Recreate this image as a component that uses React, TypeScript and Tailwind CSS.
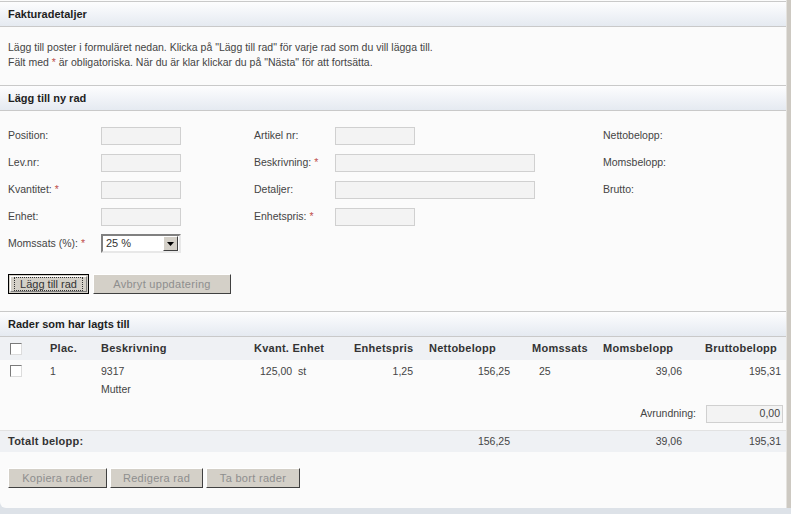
import type { ReactNode } from 'react';

function SectionHeader({ children }: { children: ReactNode }) {
  return (
    <div className="flex h-[26px] items-center border-y border-[#c9c9c9] bg-linear-to-b from-[#fdfdfe] to-[#e5eaf1] px-2 text-[11px] font-bold text-[#1e1e1e]">
      {children}
    </div>
  );
}

function Req() {
  return <span className="ml-[3px] text-[#c0504d]">*</span>;
}

function Field({ w }: { w: string }) {
  return <div className={`h-[18px] border border-[#d0d0d0] bg-[#f3f3f3] ${w}`} />;
}

function Check() {
  return <span className="block h-[12px] w-[12px] border-t border-l border-t-[#7a7a7a] border-l-[#7a7a7a] border-b border-r border-b-[#dcdcdc] border-r-[#dcdcdc] bg-white" />;
}

function GrayButton({ children, w }: { children: ReactNode; w: string }) {
  return (
    <button
      type="button"
      className={`h-[20px] border border-t-white border-l-white border-b-[#404040] border-r-[#404040] bg-[#d4d0c8] text-[11px] tracking-[0.3px] text-[#8e8e8e] ${w}`}
    >
      {children}
    </button>
  );
}

const cols = 'grid-cols-[42px_51px_153px_96px_74px_103px_71px_102px_1fr]';

export default function App() {
  return (
    <div className="w-[791px] h-[514px] overflow-hidden bg-[#dde2e8] font-['Liberation_Sans',Arial,sans-serif] text-[10.5px] text-[#444]">
      <div className="flex h-[508px]">
        <div className="flex-1 rounded-bl-[6px] bg-[#fbfbfb] pt-[1px]">
          <SectionHeader>Fakturadetaljer</SectionHeader>
          <div className="px-2 pt-[13px] pb-[15px] leading-[15px]">
            <p>Lägg till poster i formuläret nedan. Klicka på "Lägg till rad" för varje rad som du vill lägga till.</p>
            <p>
              Fält med <span className="text-[#c0504d]">*</span> är obligatoriska. När du är klar klickar du på "Nästa" för att fortsätta.
            </p>
          </div>

          <SectionHeader>Lägg till ny rad</SectionHeader>
          <div className="px-2 pt-[11px]">
            <div className="grid grid-cols-[93px_153px_81px_268px_1fr] grid-rows-[repeat(5,27px)] items-center">
              <span>Position:</span>
              <Field w="w-[80px]" />
              <span>Artikel nr:</span>
              <Field w="w-[80px]" />
              <span>Nettobelopp:</span>

              <span>Lev.nr:</span>
              <Field w="w-[80px]" />
              <span>
                Beskrivning:<Req />
              </span>
              <Field w="w-[200px]" />
              <span>Momsbelopp:</span>

              <span>
                Kvantitet:<Req />
              </span>
              <Field w="w-[80px]" />
              <span>Detaljer:</span>
              <Field w="w-[200px]" />
              <span>Brutto:</span>

              <span>Enhet:</span>
              <Field w="w-[80px]" />
              <span>
                Enhetspris:<Req />
              </span>
              <Field w="w-[80px]" />
              <span />

              <span>
                Momssats (%):<Req />
              </span>
              <div className="flex h-[19px] w-[80px] items-center justify-between border-2 border-t-[#808080] border-l-[#808080] border-b-[#e8e8e8] border-r-[#e8e8e8] bg-white pl-[3px] pr-[1px] text-[11px] text-[#333]">
                <span>25 %</span>
                <span className="flex h-[15px] w-[15px] items-center justify-center border border-t-white border-l-white border-b-[#404040] border-r-[#404040] bg-[#d4d0c8]">
                  <svg width="7" height="4" viewBox="0 0 7 4">
                    <path d="M0 0h7L3.5 4z" fill="#000" />
                  </svg>
                </span>
              </div>
              <span />
              <span />
              <span />
            </div>

            <div className="mt-[17px] flex gap-[4px]">
              <button type="button" className="h-[20px] w-[81px] border border-black bg-[#d4d0c8] p-[1px] text-[11px] text-[#333]">
                <span className="flex h-full items-center justify-center border border-t-white border-l-white border-b-[#808080] border-r-[#808080]">
                  <span className="border border-dotted border-[#333] px-[5px] leading-[12px]">Lägg till rad</span>
                </span>
              </button>
              <GrayButton w="w-[138px]">Avbryt uppdatering</GrayButton>
            </div>
          </div>

          <div className="mt-[17px]">
            <SectionHeader>Rader som har lagts till</SectionHeader>
          </div>

          <div className="px-2">
            <div className="-mx-2 bg-[#eff1f4] px-2">
              <div className={`grid h-[23px] ${cols} -mr-[4px] items-center text-[11px] font-bold tracking-[0.25px] text-[#333]`}>
                <span className="pl-[2px]"><Check /></span>
                <span>Plac.</span>
                <span>Beskrivning</span>
                <span>Kvant. Enhet</span>
                <span className="pl-[4px]">Enhetspris</span>
                <span className="pl-[5px]">Nettobelopp</span>
                <span className="pl-[5px]">Momssats</span>
                <span className="pl-[5px]">Momsbelopp</span>
                <span className="pl-[5px]">Bruttobelopp</span>
              </div>
            </div>

            <div className={`grid ${cols} -mr-[4px] pt-[2px] leading-[18px]`}>
              <span className="pl-[2px] pt-[3px]"><Check /></span>
              <span>1</span>
              <span>
                9317
                <br />
                Mutter
              </span>
              <span className="pl-[6px]">125,00&nbsp; st</span>
              <span className="pr-[11px] text-right">1,25</span>
              <span className="pr-[17px] text-right">156,25</span>
              <span className="pl-[12px]">25</span>
              <span className="pr-[18px] text-right">39,06</span>
              <span className="pr-[1px] text-right">195,31</span>
            </div>

            <div className="-mr-[5px] mt-[5px] flex h-[22px] items-center justify-end gap-[10px]">
              <span>Avrundning:</span>
              <div className="flex h-[18px] w-[77px] items-center justify-end border border-[#d0d0d0] bg-[#f3f3f3] pr-[2px]">0,00</div>
            </div>

            <div className="-mx-2 mt-[5px] border-t border-[#e2e2e2] bg-[#eff1f4] px-2">
              <div className={`grid h-[21px] ${cols} -mr-[4px] items-center`}>
                <span className="col-span-5 text-[11px] font-bold tracking-[0.25px] text-[#333]">Totalt belopp:</span>
                <span className="pr-[17px] text-right">156,25</span>
                <span />
                <span className="pr-[18px] text-right">39,06</span>
                <span className="pr-[1px] text-right">195,31</span>
              </div>
            </div>

            <div className="mt-[16px] flex gap-[3px]">
              <GrayButton w="w-[99px]">Kopiera rader</GrayButton>
              <GrayButton w="w-[93px]">Redigera rad</GrayButton>
              <GrayButton w="w-[94px]">Ta bort rader</GrayButton>
            </div>
          </div>
        </div>
        <div className="w-[1px] bg-[#e4e2de]" />
        <div className="w-[4px] bg-[#cdc9c2]" />
      </div>
    </div>
  );
}
